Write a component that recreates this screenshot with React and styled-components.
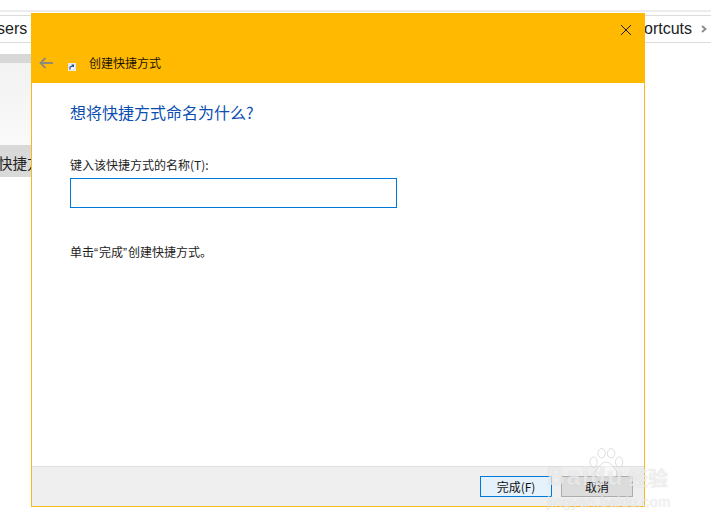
import React from "react";
import styled, { createGlobalStyle } from "styled-components";

const Global = createGlobalStyle`
  html, body {
    margin: 0;
    padding: 0;
    width: 711px;
    height: 525px;
    overflow: hidden;
    background: #fff;
    font-family: "Noto Sans CJK SC", "Liberation Sans", sans-serif;
  }
`;

const Page = styled.div`
  position: relative;
  width: 711px;
  height: 525px;
  overflow: hidden;
  background: #fff;
`;

const Explorer = styled.div`
  padding-top: 10px;
  display: flex;
  flex-direction: column;
`;

const TopRule = styled.div`
  height: 2px;
  background: #ececec;
`;

const AddressBar = styled.div`
  margin-top: 3px;
  height: 26px;
  border-top: 1px solid #dcdcdc;
  border-bottom: 1px solid #dcdcdc;
  display: flex;
  align-items: center;
  justify-content: space-between;
  font-family: "Liberation Sans", sans-serif;
  font-size: 16px;
  color: #222;
  white-space: nowrap;
`;

const Crumb = styled.span`
  display: block;
  margin-left: ${p => p.$shift || 0}px;
`;

const CrumbEnd = styled.div`
  display: flex;
  align-items: center;
  gap: 9px;
  padding-right: 4px;
`;

const Sidebar = styled.div`
  margin-top: 11px;
  width: 31px;
  display: flex;
  flex-direction: column;
`;

const SideHead = styled.div`
  height: 9px;
  background: #d8d8d8;
`;

const SideFill = styled.div`
  height: 82px;
  background: linear-gradient(#f2f2f2, #fafafa);
`;

const SideItem = styled.div`
  height: 32px;
  background: #d9d9d9;
  font-size: 14.5px;
  line-height: 36px;
  text-indent: -2px;
  color: #222;
  white-space: nowrap;
  overflow: hidden;
`;

const Dialog = styled.div`
  position: absolute;
  left: 31px;
  top: 13px;
  width: 614px;
  height: 494px;
  box-sizing: border-box;
  border: 1px solid #f6b91e;
  border-top: 0;
  background: #fff;
  display: flex;
  flex-direction: column;
`;

const Header = styled.div`
  height: 70px;
  margin: 0 -1px;
  background: #ffb900;
  display: flex;
  align-items: flex-end;
  position: relative;
`;

const HeaderRow = styled.div`
  height: 41px;
  display: flex;
  align-items: center;
  padding-left: 8px;
`;

const HeaderTitle = styled.span`
  margin-left: 13px;
  font-size: 12px;
  color: #1c1400;
`;

const CloseButton = styled.div`
  position: absolute;
  right: 13px;
  top: 11px;
  width: 12px;
  height: 12px;
  display: flex;
`;

const Body = styled.div`
  flex: 1;
  padding: 17px 38px 0;
  display: flex;
  flex-direction: column;
  align-items: flex-start;
`;

const Heading = styled.div`
  font-size: 16px;
  line-height: 24px;
  color: #0a4fb0;
`;

const FieldLabel = styled.div`
  margin-top: 32px;
  font-size: 12px;
  line-height: 18px;
  color: #222;
`;

const NameInput = styled.input`
  display: block;
  margin-top: 4px;
  width: 327px;
  height: 30px;
  box-sizing: border-box;
  border: 1px solid #0078d7;
  outline: 0;
  background: #fff;
  padding: 0 4px;
`;

const Hint = styled.div`
  margin-top: 35px;
  font-size: 12px;
  line-height: 18px;
  color: #222;
`;

const QuoteMark = styled.span`
  font-family: "Liberation Sans", sans-serif;
  letter-spacing: 1px;
`;

const Footer = styled.div`
  height: 40px;
  box-sizing: border-box;
  border-top: 1px solid #dfdfdf;
  background: #efefef;
  padding: 9px 11px 0 0;
  display: flex;
  justify-content: flex-end;
  gap: 9px;
`;

const Button = styled.div`
  width: 72px;
  height: 21px;
  box-sizing: border-box;
  border: 1px solid ${p => (p.$primary ? "#0078d7" : "#adadad")};
  background: ${p => (p.$primary ? "#e5f1fb" : "#dcdcdc")};
  font-size: 12px;
  line-height: 19px;
  text-align: center;
  color: #111;
`;

const Watermark = styled.div`
  position: absolute;
  left: 546px;
  top: 447px;
  width: 165px;
  height: 70px;
  color: rgba(255, 255, 255, 0.62);
  pointer-events: none;
  text-shadow: 0 0 1px rgba(150, 150, 150, 0.4);
`;

const MarkWord = styled.div`
  position: absolute;
  left: 1px;
  top: 15px;
  font-family: "Liberation Sans", sans-serif;
  font-weight: 700;
  font-size: 25px;
  letter-spacing: 1.5px;
  line-height: 28px;
`;

const MarkCn = styled.div`
  position: absolute;
  left: 82px;
  top: 18px;
  font-size: 20px;
  line-height: 26px;
  font-weight: 700;
`;

const MarkUrl = styled.div`
  position: absolute;
  left: 1px;
  top: 46px;
  font-family: "Liberation Sans", sans-serif;
  font-size: 14.5px;
  letter-spacing: 0.4px;
  line-height: 18px;
`;

const MarkPaw = styled.div`
  position: absolute;
  left: 41px;
  top: 1px;
`;

const ChevronIcon = () => (
  <svg width="6" height="8" viewBox="0 0 6 8">
    <path d="M1 1l3.5 3L1 7" fill="none" stroke="#8a8a8a" strokeWidth="1.8" />
  </svg>
);

const BackIcon = () => (
  <svg width="14" height="12" viewBox="0 0 14 12">
    <path d="M6.5 1L1.5 6l5 5M1.5 6H14" fill="none" stroke="#8e8a7c" strokeWidth="1.8" />
  </svg>
);

const ShortcutIcon = () => (
  <svg width="8" height="8" viewBox="0 0 8 8" style={{ margin: "8px 0 0 15px" }}>
    <rect width="8" height="8" fill="#f3f3f3" />
    <rect x="1" y="1" width="6" height="6" fill="#fff" stroke="#b8c4d0" strokeWidth="0.5" />
    <path d="M2 6.5V4.2L5 2.5M3.6 2.2H5.4V4" fill="none" stroke="#1d4fa0" strokeWidth="1.2" />
  </svg>
);

const CloseIcon = () => (
  <svg width="12" height="12" viewBox="0 0 12 12">
    <path d="M1 1l10 10M11 1L1 11" stroke="#1a1a1a" strokeWidth="1" />
  </svg>
);

const PawIcon = () => (
  <svg width="38" height="34" viewBox="0 0 52 46" fill="rgba(255,255,255,0.5)" stroke="rgba(170,170,170,0.45)" strokeWidth="1.2">
    <ellipse cx="9" cy="19" rx="5" ry="7" />
    <ellipse cx="20" cy="7" rx="5" ry="6.5" />
    <ellipse cx="33" cy="7" rx="5" ry="6.5" />
    <ellipse cx="44" cy="19" rx="5" ry="7" />
    <path d="M26 19c6 0 8 5 12 9 5 5 3 13-4 13-3 0-5-1-8-1s-5 1-8 1c-7 0-9-8-4-13 4-4 6-9 12-9z" />
  </svg>
);

export default function App() {
  return (
    <Page>
      <Global />
      <Explorer>
        <TopRule />
        <AddressBar>
          <Crumb $shift={-3}>sers</Crumb>
          <CrumbEnd>
            <Crumb>ortcuts</Crumb>
            <ChevronIcon />
          </CrumbEnd>
        </AddressBar>
        <Sidebar>
          <SideHead />
          <SideFill />
          <SideItem>快捷方式</SideItem>
        </Sidebar>
      </Explorer>

      <Dialog>
        <Header>
          <CloseButton>
            <CloseIcon />
          </CloseButton>
          <HeaderRow>
            <BackIcon />
            <ShortcutIcon />
            <HeaderTitle>创建快捷方式</HeaderTitle>
          </HeaderRow>
        </Header>
        <Body>
          <Heading>想将快捷方式命名为什么?</Heading>
          <FieldLabel>键入该快捷方式的名称(T):</FieldLabel>
          <NameInput />
          <Hint>单击<QuoteMark>“</QuoteMark>完成<QuoteMark>”</QuoteMark>创建快捷方式。</Hint>
        </Body>
        <Footer>
          <Button $primary>完成(F)</Button>
          <Button>取消</Button>
        </Footer>
      </Dialog>

      <Watermark>
        <MarkPaw>
          <PawIcon />
        </MarkPaw>
        <MarkWord>Baidu</MarkWord>
        <MarkCn>经验</MarkCn>
        <MarkUrl>jingyan.baidu.com</MarkUrl>
      </Watermark>
    </Page>
  );
}
